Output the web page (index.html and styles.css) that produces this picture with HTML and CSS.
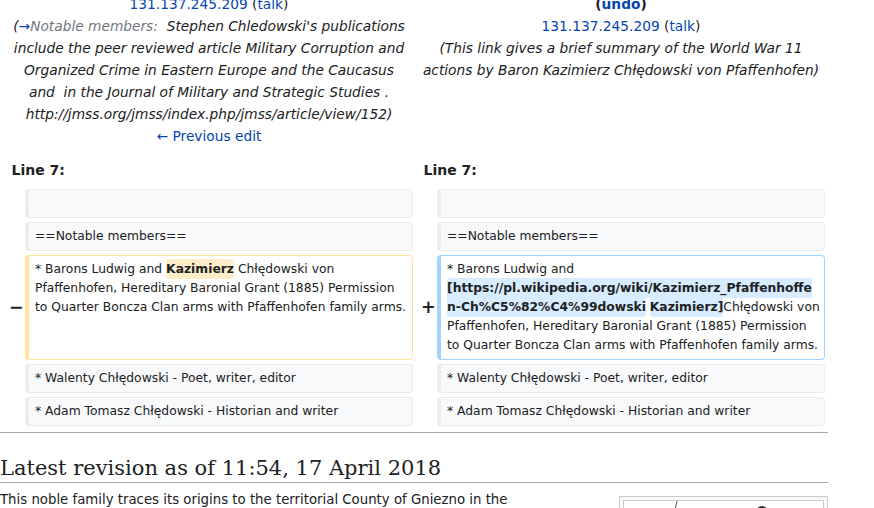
FILE: index.html
```
<!DOCTYPE html>
<html lang="en">
<head>
<meta charset="utf-8">
<title>Diff</title>
<link rel="stylesheet" href="styles.css">
</head>
<body>
<div class="page">
  <table class="diff">
    <colgroup>
      <col class="col-marker"><col class="col-content"><col class="col-marker"><col class="col-content">
    </colgroup>
    <tr>
      <td colspan="2" class="title">
        <a href="#">131.137.245.209</a> (<a href="#">talk</a>)<br>
        <span class="comment">(<a href="#">→</a><span class="autocomment">Notable members:</span>&nbsp; Stephen Chledowski's publications<br>include the peer reviewed article Military Corruption and<br>Organized Crime in Eastern Europe and the Caucasus<br>and&nbsp; in the Journal of Military and Strategic Studies .<br>http://jmss.org/jmss/index.php/jmss/article/view/152)</span><br>
        <a href="#">← Previous edit</a>
      </td>
      <td colspan="2" class="title">
        <strong>(<a href="#">undo</a>)</strong><br>
        <a href="#">131.137.245.209</a> (<a href="#">talk</a>)<br>
        <span class="comment">(This link gives a brief summary of the World War 11<br>actions by Baron Kazimierz Chłędowski von Pfaffenhofen)</span>
      </td>
    </tr>
    <tr>
      <td colspan="2" class="lineno">Line 7:</td>
      <td colspan="2" class="lineno">Line 7:</td>
    </tr>
    <tr>
      <td class="marker"></td>
      <td class="line context"><br></td>
      <td class="marker"></td>
      <td class="line context"><br></td>
    </tr>
    <tr>
      <td class="marker"></td>
      <td class="line context">==Notable members==</td>
      <td class="marker"></td>
      <td class="line context">==Notable members==</td>
    </tr>
    <tr>
      <td class="marker">−</td>
      <td class="line deleted">* Barons Ludwig and <del class="chg">Kazimierz</del> Chłędowski von<br>Pfaffenhofen, Hereditary Baronial Grant (1885) Permission<br>to Quarter Boncza Clan arms with Pfaffenhofen family arms.</td>
      <td class="marker">+</td>
      <td class="line added">* Barons Ludwig and<br><ins class="chg">[https://pl.wikipedia.org/wiki/Kazimierz_Pfaffenhoffe<br>n-Ch%C5%82%C4%99dowski</ins> <ins class="chg">Kazimierz]</ins>Chłędowski von<br>Pfaffenhofen, Hereditary Baronial Grant (1885) Permission<br>to Quarter Boncza Clan arms with Pfaffenhofen family arms.</td>
    </tr>
    <tr>
      <td class="marker"></td>
      <td class="line context">* Walenty Chłędowski - Poet, writer, editor</td>
      <td class="marker"></td>
      <td class="line context">* Walenty Chłędowski - Poet, writer, editor</td>
    </tr>
    <tr>
      <td class="marker"></td>
      <td class="line context">* Adam Tomasz Chłędowski - Historian and writer</td>
      <td class="marker"></td>
      <td class="line context">* Adam Tomasz Chłędowski - Historian and writer</td>
    </tr>
  </table>
  <div class="diff-hr"></div>
  <h2 class="revtitle">Latest revision as of 11:54, 17 April 2018</h2>
  <div class="body">
    <div class="thumb">
      <div class="thumbimage">
        <svg width="199" height="40" viewBox="0 0 199 40">
          <path d="M53 0 L51 9" stroke="#555" stroke-width="1" fill="none"/>
          <path d="M134 8 Q138 4 142 8" stroke="#333" stroke-width="2" fill="none"/>
        </svg>
      </div>
    </div>
    <p>This noble family traces its origins to the territorial County of Gniezno in the</p>
  </div>
</div>
</body>
</html>
```
FILE: styles.css
```
html, body {
  margin: 0;
  padding: 0;
  background: #ffffff;
  overflow: hidden;
}

body {
  font-family: "DejaVu Sans", sans-serif;
  color: #202122;
  font-size: 14px;
}

a {
  color: #0645ad;
  text-decoration: none;
}

.page {
  width: 828px;
}

table.diff {
  width: 828px;
  border-collapse: separate;
  border-spacing: 4px;
  table-layout: fixed;
  margin: -15px 0 0 1px;
}

.col-marker {
  width: 16px;
}

.col-content {
  width: 388px;
}

table.diff td {
  padding: 0;
}

table.diff td.title {
  padding: 4px 0;
  text-align: center;
  vertical-align: top;
  line-height: 22px;
  font-size: 13.75px;
}

.comment {
  font-style: italic;
}

.autocomment {
  color: #72777d;
}

table.diff td.lineno {
  padding: 4px 6.5px;
  font-weight: bold;
  line-height: 22px;
}

table.diff td.marker {
  font-size: 17.5px;
  font-weight: bold;
  vertical-align: middle;
  text-align: left;
  padding-left: 4px;
  white-space: nowrap;
  line-height: 1.2;
}

table.diff td.line {
  font-size: 12.32px;
  line-height: 19px;
  padding: 4px 6px;
  border-style: solid;
  border-width: 1px 1px 1px 4px;
  border-radius: 4px;
  vertical-align: top;
  white-space: nowrap;
}

table.diff td.context {
  background: #f8f9fa;
  border-color: #eaecf0;
}

table.diff td.deleted {
  background: #ffffff;
  border-color: #ffe49c;
}

table.diff td.added {
  background: #ffffff;
  border-color: #a3d3ff;
}

.chg {
  font-weight: bold;
  text-decoration: none;
  border-radius: 4px;
  padding: 3px 0;
}

del.chg {
  background: #feeec8;
}

ins.chg {
  background: #d8ecff;
}

.diff-hr {
  border-top: 1px solid #a2a9b1;
  margin-top: 2px;
}

h2.revtitle {
  font-family: "DejaVu Serif", serif;
  font-weight: normal;
  font-size: 21px;
  line-height: 27px;
  margin: 22px 0 0;
  padding: 0;
  border-bottom: 1px solid #a2a9b1;
}

.body {
  padding-top: 6px;
}

.body p {
  margin: 0;
  font-size: 13.3px;
  line-height: 22px;
}

.thumb {
  float: right;
  width: 201px;
  margin-top: 7px;
  padding: 3px;
  background: #f8f9fa;
  border: 1px solid #c8ccd1;
}

.thumbimage {
  border: 1px solid #c8ccd1;
  background: #ffffff;
  height: 200px;
}

.thumbimage svg {
  display: block;
}
```
